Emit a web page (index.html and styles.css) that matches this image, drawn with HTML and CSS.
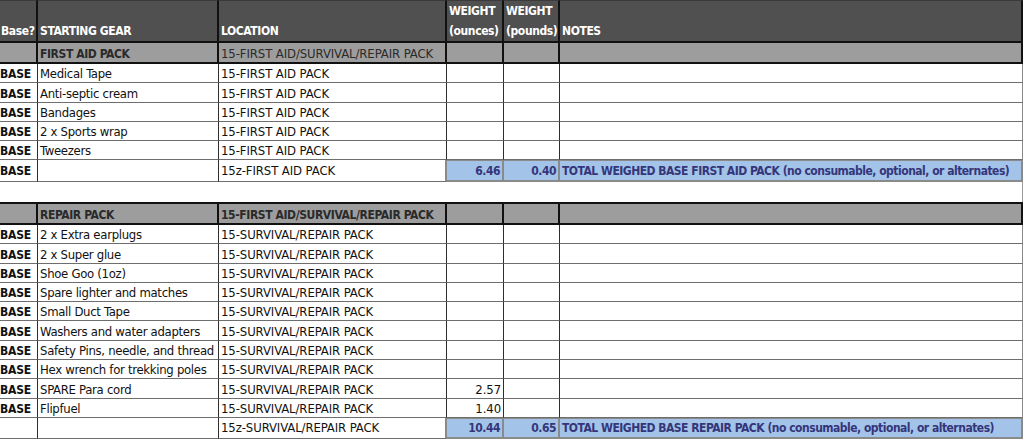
FILE: index.html
```html
<!DOCTYPE html>
<html>
<head>
<meta charset="utf-8">
<link rel="stylesheet" href="styles.css">
</head>
<body>
<div class="sheet">
  <div class="row head">
    <div class="cell first">Base?</div>
    <div class="cell">STARTING GEAR</div>
    <div class="cell">LOCATION</div>
    <div class="cell">WEIGHT<br>(ounces)</div>
    <div class="cell">WEIGHT<br>(pounds)</div>
    <div class="cell">NOTES</div>
  </div>

  <div class="row section">
    <div class="cell first"></div><div class="cell">FIRST AID PACK</div><div class="cell plain">15-FIRST AID/SURVIVAL/REPAIR PACK</div><div class="cell"></div><div class="cell"></div><div class="cell"></div>
  </div>
  <div class="row item"><div class="cell first tag">BASE</div><div class="cell gear">Medical Tape</div><div class="cell">15-FIRST AID PACK</div><div class="cell num"></div><div class="cell num"></div><div class="cell"></div></div>
  <div class="row item"><div class="cell first tag">BASE</div><div class="cell gear">Anti-septic cream</div><div class="cell">15-FIRST AID PACK</div><div class="cell num"></div><div class="cell num"></div><div class="cell"></div></div>
  <div class="row item"><div class="cell first tag">BASE</div><div class="cell gear">Bandages</div><div class="cell">15-FIRST AID PACK</div><div class="cell num"></div><div class="cell num"></div><div class="cell"></div></div>
  <div class="row item"><div class="cell first tag">BASE</div><div class="cell gear">2 x Sports wrap</div><div class="cell">15-FIRST AID PACK</div><div class="cell num"></div><div class="cell num"></div><div class="cell"></div></div>
  <div class="row item"><div class="cell first tag">BASE</div><div class="cell gear">Tweezers</div><div class="cell">15-FIRST AID PACK</div><div class="cell num"></div><div class="cell num"></div><div class="cell"></div></div>
  <div class="row total"><div class="cell first tag">BASE</div><div class="cell gear"></div><div class="cell loc">15z-FIRST AID PACK</div><div class="cell num sum">6.46</div><div class="cell num sum">0.40</div><div class="cell sum">TOTAL WEIGHED BASE FIRST AID PACK (no consumable, optional, or alternates)</div></div>

  <div class="gap"></div>

  <div class="row section top">
    <div class="cell first"></div><div class="cell">REPAIR PACK</div><div class="cell">15-FIRST AID/SURVIVAL/REPAIR PACK</div><div class="cell"></div><div class="cell"></div><div class="cell"></div>
  </div>
  <div class="row item"><div class="cell first tag">BASE</div><div class="cell gear">2 x Extra earplugs</div><div class="cell">15-SURVIVAL/REPAIR PACK</div><div class="cell num"></div><div class="cell num"></div><div class="cell"></div></div>
  <div class="row item"><div class="cell first tag">BASE</div><div class="cell gear">2 x Super glue</div><div class="cell">15-SURVIVAL/REPAIR PACK</div><div class="cell num"></div><div class="cell num"></div><div class="cell"></div></div>
  <div class="row item"><div class="cell first tag">BASE</div><div class="cell gear">Shoe Goo (1oz)</div><div class="cell">15-SURVIVAL/REPAIR PACK</div><div class="cell num"></div><div class="cell num"></div><div class="cell"></div></div>
  <div class="row item"><div class="cell first tag">BASE</div><div class="cell gear">Spare lighter and matches</div><div class="cell">15-SURVIVAL/REPAIR PACK</div><div class="cell num"></div><div class="cell num"></div><div class="cell"></div></div>
  <div class="row item"><div class="cell first tag">BASE</div><div class="cell gear">Small Duct Tape</div><div class="cell">15-SURVIVAL/REPAIR PACK</div><div class="cell num"></div><div class="cell num"></div><div class="cell"></div></div>
  <div class="row item"><div class="cell first tag">BASE</div><div class="cell gear">Washers and water adapters</div><div class="cell">15-SURVIVAL/REPAIR PACK</div><div class="cell num"></div><div class="cell num"></div><div class="cell"></div></div>
  <div class="row item"><div class="cell first tag">BASE</div><div class="cell gear">Safety Pins, needle, and thread</div><div class="cell">15-SURVIVAL/REPAIR PACK</div><div class="cell num"></div><div class="cell num"></div><div class="cell"></div></div>
  <div class="row item"><div class="cell first tag">BASE</div><div class="cell gear">Hex wrench for trekking poles</div><div class="cell">15-SURVIVAL/REPAIR PACK</div><div class="cell num"></div><div class="cell num"></div><div class="cell"></div></div>
  <div class="row item"><div class="cell first tag">BASE</div><div class="cell gear">SPARE Para cord</div><div class="cell">15-SURVIVAL/REPAIR PACK</div><div class="cell num">2.57</div><div class="cell num"></div><div class="cell"></div></div>
  <div class="row item"><div class="cell first tag">BASE</div><div class="cell gear">Flipfuel</div><div class="cell">15-SURVIVAL/REPAIR PACK</div><div class="cell num">1.40</div><div class="cell num"></div><div class="cell"></div></div>
  <div class="row total"><div class="cell first tag"></div><div class="cell gear"></div><div class="cell loc">15z-SURVIVAL/REPAIR PACK</div><div class="cell num sum">10.44</div><div class="cell num sum">0.65</div><div class="cell sum">TOTAL WEIGHED BASE REPAIR PACK (no consumable, optional, or alternates)</div></div>
</div>
</body>
</html>
```
FILE: styles.css
```css
html, body {
  margin: 0;
  padding: 0;
  background: #ffffff;
}

body {
  font-family: "DejaVu Sans Condensed", "DejaVu Sans", sans-serif;
  font-size: 13px;
  letter-spacing: -0.1px;
  color: #111111;
}

.sheet {
  width: 1023px;
  display: flex;
  flex-direction: column;
}

.row {
  display: grid;
  grid-template-columns: 38px 181px 228px 57px 56px 463px;
  flex: none;
}

.cell {
  box-sizing: border-box;
  display: flex;
  align-items: flex-end;
  padding: 0 2px;
  min-width: 0;
  white-space: nowrap;
  overflow: hidden;
  line-height: 14px;
}

/* header */
.head {
  height: 43px;
}

.head .cell {
  background: #505050;
  color: #ffffff;
  font-weight: bold;
  font-size: 12px;
  letter-spacing: -0.4px;
  line-height: 20px;
  border-top: 1px solid #3a3a3a;
  border-right: 2px solid #111111;
  border-bottom: 2px solid #111111;
}

.head .cell.first {
  padding-left: 1px;
}

/* section title rows */
.section {
  height: 21px;
}

.section.top {
  height: 23px;
}

.section .cell {
  background: #9d9d9d;
  color: #2a2a2a;
  font-weight: bold;
  font-size: 12px;
  letter-spacing: -0.4px;
  padding-bottom: 1px;
  border-right: 2px solid #111111;
  border-bottom: 2px solid #111111;
}

.section.top .cell {
  border-top: 2px solid #111111;
}

.section .cell.plain {
  font-weight: normal;
  font-size: 13px;
  letter-spacing: -0.1px;
}

/* item rows */
.item {
  height: 19.3px;
}

.item .cell,
.total .cell {
  padding-bottom: 1px;
  border-right: 1px solid #2e2e2e;
  border-bottom: 1px solid #6e6e6e;
}

.cell.first {
  padding-left: 0;
}

.cell.tag {
  font-weight: bold;
  font-size: 12px;
  letter-spacing: -0.2px;
  color: #111111;
}

.cell.gear {
  letter-spacing: -0.3px;
}

.cell.num {
  justify-content: flex-end;
}

.item .cell:last-child {
  border-right-color: #8a8a8a;
}

/* totals */
.total {
  height: 21.5px;
}

.total .cell {
  padding-bottom: 3px;
}

.total .cell.loc {
  border-right: 2px solid #8a8a8a;
}

.total .cell.sum {
  background: #a3c3e9;
  color: #35367a;
  font-weight: bold;
  font-size: 12px;
  letter-spacing: -0.5px;
  padding-bottom: 2px;
  border-top: 1px solid #8a8a8a;
  border-right: 2px solid #8a8a8a;
  border-bottom: 2px solid #8a8a8a;
}

.gap {
  height: 20px;
  flex: none;
  box-sizing: border-box;
  border-right: 1px solid #9a9a9a;
}
```
